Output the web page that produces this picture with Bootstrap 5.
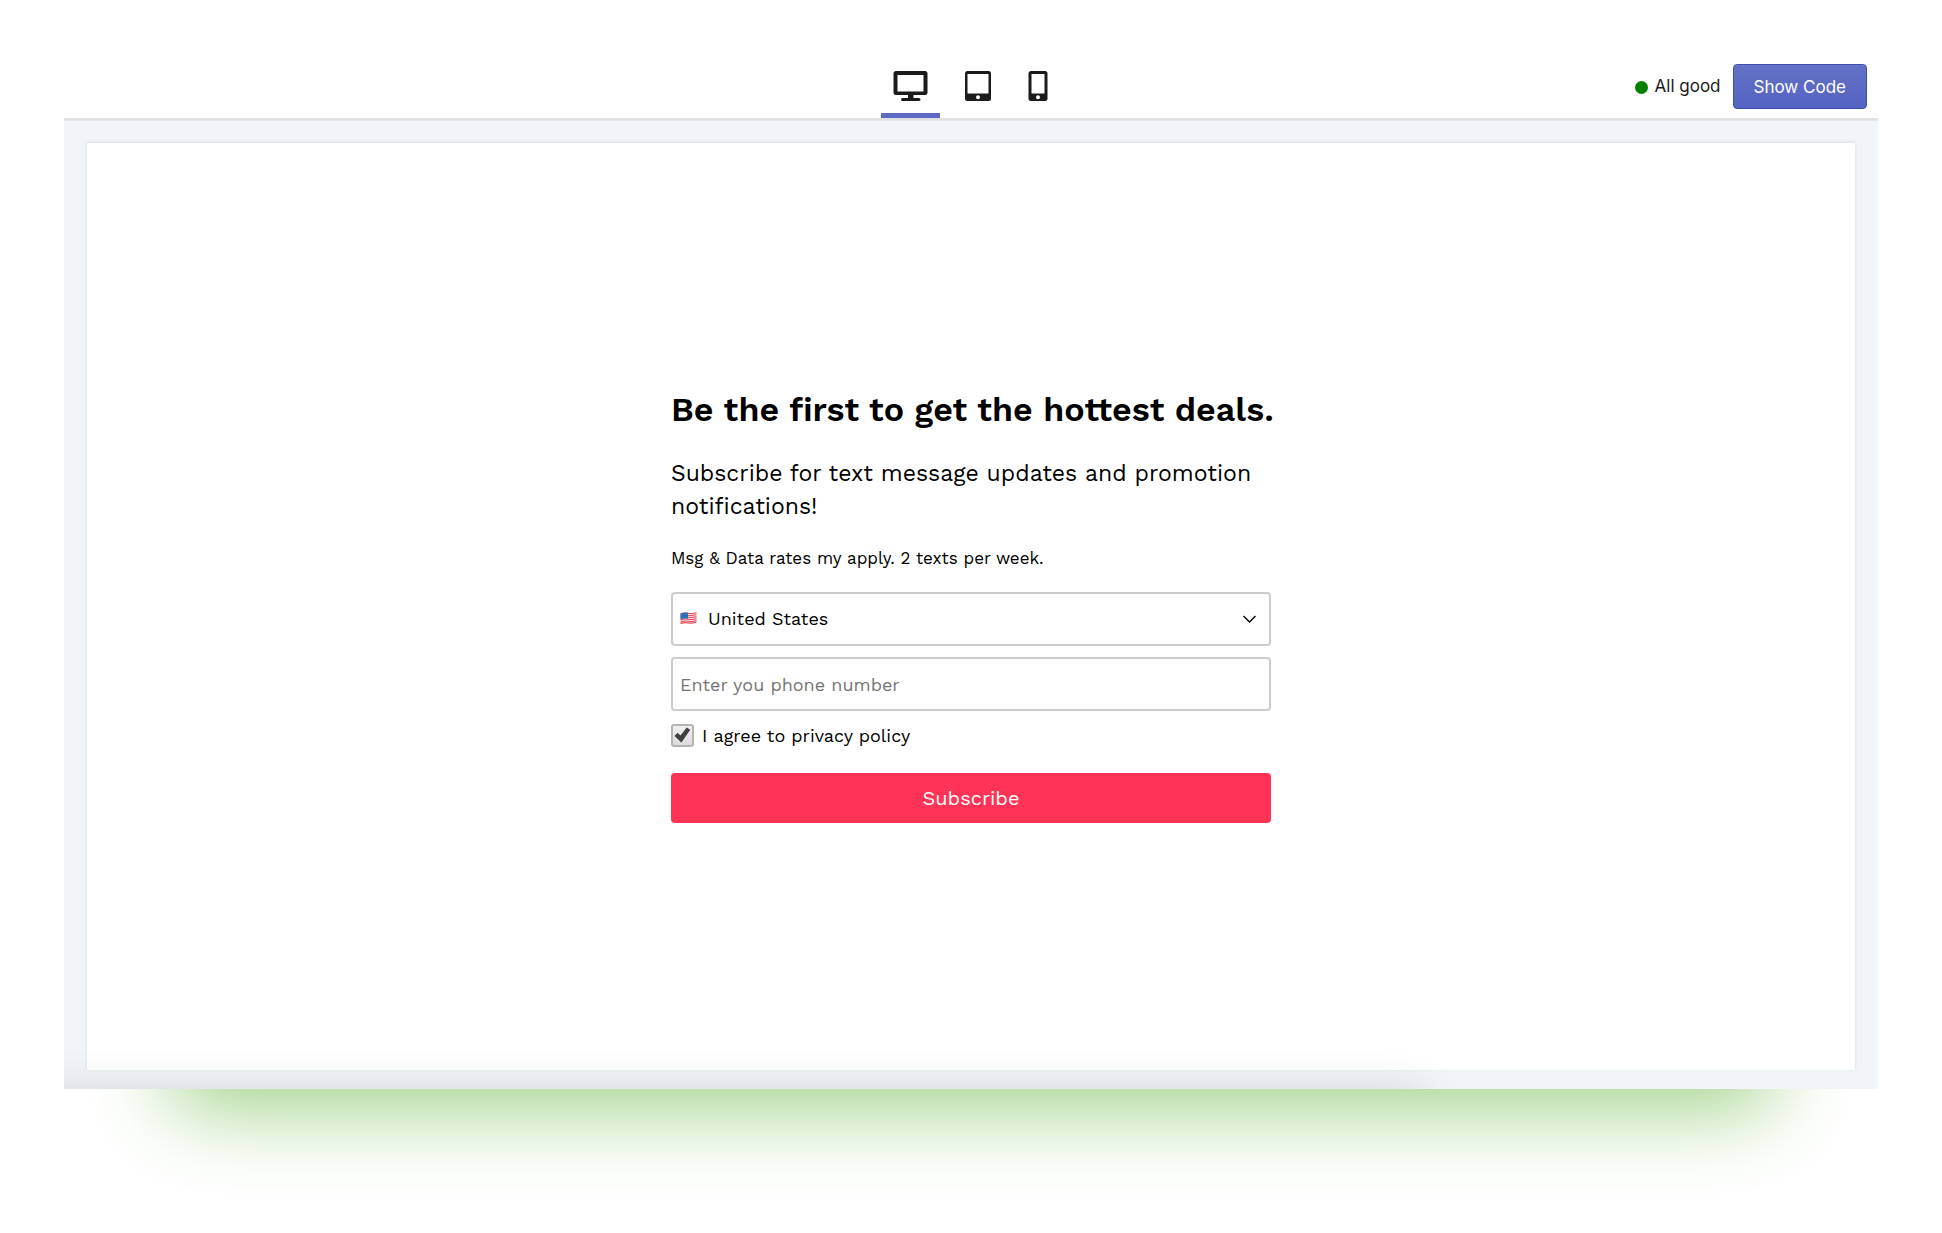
<!DOCTYPE html>
<html lang="en">
<head>
<meta charset="utf-8">
<meta name="viewport" content="width=device-width, initial-scale=1">
<title>Form preview</title>
<link href="https://cdn.jsdelivr.net/npm/bootstrap@5.3.0/dist/css/bootstrap.min.css" rel="stylesheet">
<style>
  body { background: #fff; color: #000; font-family: "Work Sans", "Noto Sans", sans-serif; }
  .page-shell { padding: 56px 64px 144px; }
  .preview-frame { box-shadow: 0 126px 80px -108px rgb(157, 208, 131); }
  .toolbar { height: 62px; padding: 0 11px 0 9px; background: #fff; font-family: Inter, sans-serif; color: #1b1b1b; }
  .device-tabs { gap: 12px; }
  .device-tab { padding: 2px 12px 0; border: 0; border-bottom: 5px solid transparent; background: none; color: #1b1b1b; }
  .device-tab.active { border-bottom-color: #5c6ac4; }
  .status-text { font-size: 17px; gap: 7px; padding-top: 2px; }
  .status-dot { width: 13px; height: 13px; background: #008000; }
  .toolbar-actions { padding-bottom: 2px; }
  .btn-code { height: 45px; padding: 4px 20px 0; font-size: 17px; color: #fff; border: 1px solid #3f4eae; border-radius: 4px;
    background: linear-gradient(#6371c7, #5563c1); box-shadow: inset 0 1px 0 #6774c8; }
  .btn-code:hover { color: #fff; border-color: #3f4eae; }
  .stage { padding: 25px 23px 19px; background: #f1f5f8; overflow: hidden; }
  .stage::before { content: ""; position: absolute; top: 0; left: 0; right: 0; height: 3px; background: linear-gradient(#dfe0e2 60%, #e9ecef); }
  .stage::after { content: ""; position: absolute; top: 100%; left: -60px; right: 25%; height: 60px;
    box-shadow: 0 0 42px rgba(0, 0, 0, .12); pointer-events: none; }
  .canvas-panel { background: #fff; box-shadow: 0 -1px 3px rgba(60, 80, 100, .16); }
  .signup { max-width: 600px; }
  .signup-title { font-size: 34px; line-height: 38px; font-weight: 600; margin-bottom: 29px; white-space: nowrap; }
  .signup-text { font-size: 23px; line-height: 33px; margin-bottom: 23px; }
  .signup-note { font-size: 17px; line-height: 24px; margin-bottom: 22px; }
  .field-box { height: 54px; border: 2px solid #ccc; border-radius: 4px; background: #fff; padding: 0 7px; font-size: 18px; color: #000; }
  .field-box::placeholder { color: #757575; opacity: 1; }
  .field-country { margin-bottom: 11px; padding-bottom: 2px; }
  .country-select { border: 0; padding: 0 24px 0 11px; font-size: 18px; color: #000; background-color: transparent;
    background-position: right 5px center; background-size: 15px 15px;
    background-image: url("data:image/svg+xml,%3Csvg xmlns='http://www.w3.org/2000/svg' viewBox='0 0 15 15'%3E%3Cpath fill='none' stroke='%23000' stroke-width='1.4' d='M1.5 5l6 6 6-6'/%3E%3C/svg%3E"); }
  .agree-row { margin: 13px 0 26px; gap: 8px; font-size: 18px; line-height: 23px; }
  .agree-box.form-check-input { width: 23px; height: 23px; margin: 0; border: 2px solid #b4b4b4; border-radius: 3px; background-color: #e6e6e6; }
  .agree-box.form-check-input:checked { border-color: #b4b4b4; background-color: #e4e4e4; background-size: 100% 100%;
    background-image: url("data:image/svg+xml,%3Csvg xmlns='http://www.w3.org/2000/svg' viewBox='0 0 19 19'%3E%3Cpath fill='%23404040' d='M1.5 10l3-3.2 3 2.8 6.2-8.2 3.6 2.4-8.9 12.7z'/%3E%3C/svg%3E"), linear-gradient(#f0f0f0, #dcdcdc); }
  .btn-subscribe { height: 50px; font-size: 20px; padding: 0; color: #fff; background: #ff3355; border: 0; border-radius: 4px; }
  .btn-subscribe:hover { color: #fff; background: #f02648; }
</style>
</head>
<body>
<div class="page-shell d-flex flex-column min-vh-100">
  <main class="preview-frame d-flex flex-column flex-grow-1">
    <header class="toolbar d-flex align-items-stretch">
      <div class="col"></div>
      <nav class="device-tabs d-flex" aria-label="Preview size">
        <button type="button" class="device-tab active" aria-label="Desktop">
          <svg width="35" height="32" viewBox="0 0 35 32" aria-hidden="true"><path fill="currentColor" fill-rule="evenodd" d="M3 1h29a2.500 2.500 0 0 1 2.500 2.500v19a2.500 2.500 0 0 1-2.500 2.500H20.500v3H26a1.500 1.500 0 0 1 0 3H9.500a1.500 1.500 0 0 1 0-3H15v-3H3A2.500 2.500 0 0 1 .5 22.500v-19A2.500 2.500 0 0 1 3 1zM4.500 5v16.500h26V5z"/></svg>
        </button>
        <button type="button" class="device-tab" aria-label="Tablet">
          <svg width="28" height="32" viewBox="0 0 28 32" aria-hidden="true"><path fill="currentColor" fill-rule="evenodd" d="M3.500 1h21A2.500 2.500 0 0 1 27 3.500v25a2.500 2.500 0 0 1-2.500 2.500h-21A2.500 2.500 0 0 1 1 28.500v-25A2.500 2.500 0 0 1 3.500 1zM3.500 4v19.500h21V4zM14 25.200a2 2 0 1 0 0 4 2 2 0 0 0 0-4z"/></svg>
        </button>
        <button type="button" class="device-tab" aria-label="Phone">
          <svg width="20" height="32" viewBox="0 0 20 32" aria-hidden="true"><path fill="currentColor" fill-rule="evenodd" d="M3 1h14a2.500 2.500 0 0 1 2.500 2.500v25A2.500 2.500 0 0 1 17 31H3a2.500 2.500 0 0 1-2.500-2.500v-25A2.500 2.500 0 0 1 3 1zM3.500 4v19.500h13V4zM10 25.200a2 2 0 1 0 0 4 2 2 0 0 0 0-4z"/></svg>
        </button>
      </nav>
      <div class="toolbar-actions col d-flex align-items-center justify-content-end">
        <span class="status-text d-flex align-items-center me-2 pe-1"><span class="status-dot rounded-circle"></span>All good</span>
        <button type="button" class="btn btn-code">Show Code</button>
      </div>
    </header>
    <section class="stage position-relative d-flex flex-grow-1">
      <div class="canvas-panel d-flex flex-grow-1 align-items-center justify-content-center">
        <form class="signup w-100">
          <h1 class="signup-title">Be the first to get the hottest deals.</h1>
          <p class="signup-text">Subscribe for text message updates and promotion notifications!</p>
          <p class="signup-note">Msg &amp; Data rates my apply. 2 texts per week.</p>
          <div class="field-box field-country d-flex align-items-center">
            <svg class="flex-shrink-0" width="17" height="14" viewBox="0 0 17 14" aria-hidden="true">
              <path fill="#f3dfe2" d="M.5 2.500q4-1.500 8-.7t8-.8v10.500q-4 1.600-8 .8t-8 .7z"/>
              <path fill="none" stroke="#e5505f" stroke-width="1.100" d="M.5 3q4-1.500 8-.7t8-.8M.5 5q4-1.500 8-.7t8-.8M.5 7q4-1.500 8-.7t8-.8M.5 9q4-1.500 8-.7t8-.8M.5 11q4-1.500 8-.7t8-.8M.5 12.600q4-1.500 8-.7t8-.8"/>
              <path fill="#2f6fb7" d="M.5 2.500q4-1.500 7.500-.8v6.100q-3.500-.6-7.500.7z"/>
            </svg>
            <select class="form-select country-select" aria-label="Country"><option selected>United States</option></select>
          </div>
          <input type="tel" class="form-control field-box" placeholder="Enter you phone number" aria-label="Phone number">
          <div class="agree-row d-flex align-items-center">
            <input class="form-check-input agree-box" type="checkbox" id="agree" checked>
            <label for="agree">I agree to privacy policy</label>
          </div>
          <button type="submit" class="btn btn-subscribe w-100">Subscribe</button>
        </form>
      </div>
    </section>
  </main>
</div>
<script src="https://cdn.jsdelivr.net/npm/bootstrap@5.3.0/dist/js/bootstrap.bundle.min.js"></script>
</body>
</html>
